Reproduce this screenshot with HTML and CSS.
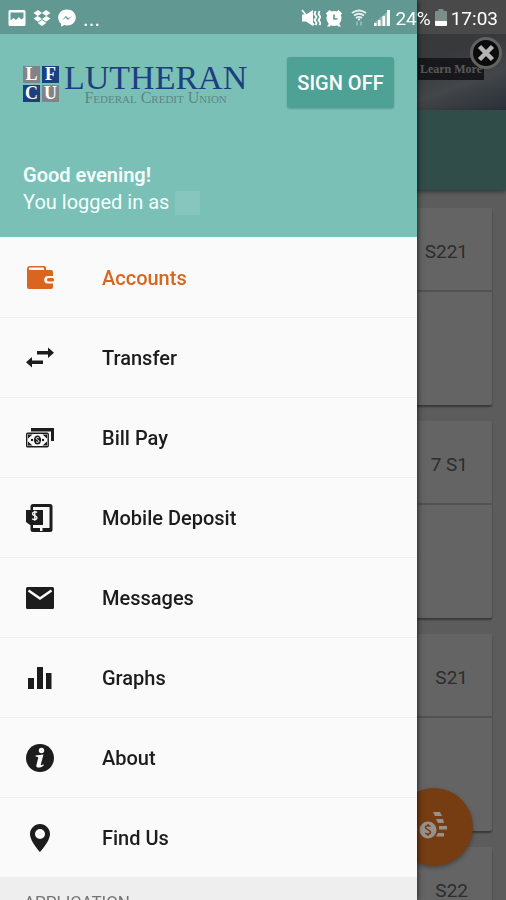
FILE: index.html
```
<!DOCTYPE html>
<html lang="en">
  <head>
    <meta charset="UTF-8" />
    <meta name="viewport" content="width=device-width, initial-scale=1.0" />
    <title>Lutheran Federal Credit Union</title>
    <link rel="stylesheet" href="styles.css">
  </head>
  <body>
    <!-- Accounts page behind the drawer -->
    <main class="page">
      <div class="banner">
        <a class="banner-link" href="#">Learn More</a>
      </div>
      <div class="toolbar"></div>
      <div class="cards">
        <section class="card"><h2 class="card-title">S221</h2></section>
        <section class="card"><h2 class="card-title">7 S1</h2></section>
        <section class="card"><h2 class="card-title">S21</h2></section>
        <section class="card"><h2 class="card-title">S22</h2></section>
      </div>
    </main>
    <div class="scrim"></div>

    <button class="close" type="button" aria-label="Close banner">
      <svg viewBox="0 0 32 32" width="32" height="32">
        <circle cx="16" cy="16" r="14.500" fill="#0b0b0b" stroke="#626262" stroke-width="3" />
        <path d="M9.500 9.500l13 13M22.500 9.500l-13 13" stroke="#b4b4b4" stroke-width="4.500" />
      </svg>
    </button>

    <button class="fab" type="button" aria-label="Payments">
      <svg viewBox="0 0 32 32" width="32" height="32">
        <g fill="#96928e">
          <path d="M15 1h7l2 4h-7zM18 8h7l1 4h-6zM21 15h8v3.500h-8zM20 22h6v3.500h-8z" />
          <circle cx="10" cy="19" r="8.500" />
        </g>
        <path d="M12.500 15.500c-1-1.200-5-1.200-5 1s5 2.500 5 4.700-4 2.300-5.200.8M10 13v2M10 23v2" fill="none" stroke="#763c12" stroke-width="1.600" />
      </svg>
    </button>

    <!-- Drawer -->
    <aside class="drawer">
      <header class="drawer-header">
        <div class="brand-row">
          <div class="brand">
            <div class="brand-mark">
              <span>L</span><span class="navy">F</span><span class="navy">C</span><span>U</span>
            </div>
            <div class="brand-text">
              <span class="brand-name">LUTHERAN</span>
              <span class="brand-sub">Federal Credit Union</span>
            </div>
          </div>
          <button class="sign-off" type="button">SIGN OFF</button>
        </div>
        <div class="greeting">
          <strong>Good evening!</strong>
          <p>You logged in as <span class="user"></span></p>
        </div>
      </header>

      <nav class="menu">
        <a class="menu-item active" href="#">
          <svg viewBox="0 0 32 32" width="32" height="32">
            <path d="M6 4h14a2 2 0 0 1 2 2v2h5a2 2 0 0 1 2 2v15a2 2 0 0 1-2 2H5a2 2 0 0 1-2-2V7a3 3 0 0 1 3-3zM6 5.500a1.200 1.200 0 0 0 0 2.500h14V6.500a1 1 0 0 0-1-1z" fill="currentColor" fill-rule="evenodd" />
            <path d="M30 14h-6a3.800 3.800 0 0 0 0 7.600h6z" fill="#fafafa" />
            <rect x="23" y="16" width="7" height="3.600" rx="1.500" fill="currentColor" />
          </svg>
          Accounts
        </a>
        <a class="menu-item" href="#">
          <svg viewBox="0 0 32 32" width="32" height="32" fill="currentColor">
            <path d="M13 9h11V5.500l6 5.200-6 5.200v-3.500H13zM19 18.500H8V15l-6 5.200 6 5.300V22h11z" />
          </svg>
          Transfer
        </a>
        <a class="menu-item" href="#">
          <svg viewBox="0 0 32 32" width="32" height="32">
            <path d="M7 6h23v13h-3V9.500H7z" fill="currentColor" />
            <rect x="2.700" y="11.200" width="21.500" height="13.600" rx="1" fill="#fafafa" stroke="currentColor" stroke-width="1.400" />
            <path d="M4 12.500h4.500L4 16.500zM23 12.500v4l-4.500-4zM4 19.500l4.500 4H4zM23 19.500v4h-4.500z" fill="currentColor" />
            <circle cx="8" cy="18" r="1.200" fill="currentColor" />
            <circle cx="19" cy="18" r="1.200" fill="currentColor" />
            <ellipse cx="13.500" cy="18" rx="3.600" ry="4.600" fill="currentColor" />
            <path d="M15 16c-1-1-2.800-.6-2.800.6s2.800 1.200 2.800 2.600-2 1.400-3 .5" fill="none" stroke="#fafafa" stroke-width="1" />
          </svg>
          Bill Pay
        </a>
        <a class="menu-item" href="#">
          <svg viewBox="0 0 32 32" width="32" height="32">
            <path d="M9 2h17a2.500 2.500 0 0 1 2.500 2.500v23a2.500 2.500 0 0 1-2.500 2.500H9a2.500 2.500 0 0 1-2.500-2.500v-23A2.500 2.500 0 0 1 9 2zm0 3v21h16.500V5z" fill="currentColor" fill-rule="evenodd" />
            <path d="M2 8h17v15H6l-4-3z" fill="currentColor" />
            <path d="M13 10.500c-1.200-1.300-4.500-.9-4.500 1.200s4.500 1.700 4.500 4-3.600 2.300-4.800.9M10.800 8.800v10" fill="none" stroke="#fafafa" stroke-width="1.400" />
            <path d="M16 25h2.500v4H16z" fill="#fafafa" />
          </svg>
          Mobile Deposit
        </a>
        <a class="menu-item" href="#">
          <svg viewBox="0 0 32 32" width="32" height="32">
            <rect x="2" y="5" width="28" height="22" rx="1.500" fill="currentColor" />
            <path d="M4.500 8.500L16 16.500l11.500-8" fill="none" stroke="#fafafa" stroke-width="2.600" />
          </svg>
          Messages
        </a>
        <a class="menu-item" href="#">
          <svg viewBox="0 0 32 32" width="32" height="32" fill="currentColor">
            <path d="M4 16h6v11H4zM13 5h6v22h-6zM22 11h5.500v16H22z" />
          </svg>
          Graphs
        </a>
        <a class="menu-item" href="#">
          <svg viewBox="0 0 32 32" width="32" height="32">
            <circle cx="16" cy="16" r="14" fill="currentColor" />
            <circle cx="17.500" cy="8.500" r="2.700" fill="#fafafa" />
            <path d="M11.500 13.500l8-1-2.700 10c-.3 1.200 1 1 2.500-.3l.5 1c-2 2.500-8 3.500-7.500.3l1.900-7.500c.2-1-.7-1.200-2.400-1.200z" fill="#fafafa" />
          </svg>
          About
        </a>
        <a class="menu-item" href="#">
          <svg viewBox="0 0 32 32" width="32" height="32" fill="currentColor">
            <path d="M16 2C10.500 2 6 6.500 6 12c0 7.300 10 18 10 18s10-10.700 10-18c0-5.500-4.500-10-10-10zm0 5a5 5 0 1 1 0 10 5 5 0 0 1 0-10z" fill-rule="evenodd" />
          </svg>
          Find Us
        </a>
      </nav>
      <h2 class="menu-heading">APPLICATION</h2>
    </aside>

    <!-- Android status bar -->
    <div class="status-bar">
      <svg viewBox="0 0 18 18" width="18" height="18">
        <path d="M2 1h14a1.500 1.500 0 0 1 1.500 1.500v13A1.500 1.500 0 0 1 16 17H2A1.500 1.500 0 0 1 .5 15.500v-13A1.500 1.500 0 0 1 2 1zm.5 2.500v8l3-2.500 2.500 2 3-3 2 2.500 2.500-1.500v-5.500z" fill-rule="evenodd" />
      </svg>
      <svg viewBox="0 0 18 18" width="18" height="18">
        <path d="M5 1l4 3-4.300 3L.5 4zM13 1l4.500 3-4.200 3L9 4zM.5 9.500l4.200-2.500L9 10l-4 2.800zM17.500 9.500L13.300 7 9 10l4 2.800zM9 11l4.300 3L9 17l-4.300-3z" />
      </svg>
      <svg viewBox="0 0 18 18" width="18" height="18">
        <path d="M9 .5c5 0 8.800 3.500 8.800 8S14 16.500 9 16.500c-1 0-2-.1-2.800-.4L3 17.800v-3.200C1.200 13.200.2 11 .2 8.500.2 4 4 .5 9 .5z" />
        <path d="M4 11l4-4 2.300 2.200L14 7l-4 4-2.300-2.200z" fill="#639a92" />
      </svg>
      <span class="more">...</span>
      <div class="status-right">
        <svg viewBox="0 0 20 18" width="20" height="18">
          <path d="M1 5.500h4l7-4.500v16l-7-4.500H1z" />
          <path d="M1 1l12 15" fill="none" stroke="#fff" stroke-width="1.600" />
          <path d="M14.500 2l-1 3 2 3-2 3 2 3-1 2M18.500 2l-1 3 2 3-2 3 2 3-1 2" fill="none" stroke="#fff" stroke-width="1.800" />
        </svg>
        <svg viewBox="0 0 18 18" width="18" height="18">
          <circle cx="9" cy="9.500" r="7.500" />
          <path d="M.8 4.500L4.500 1l2 1.500-4 4zM17.200 4.500L13.500 1l-2 1.500 4 4zM2 17.500l2-3 2 1.500-1 1.500zM16 17.500l-2-3-2 1.500 1 1.500z" />
          <path d="M9 5.500v4.500h3.500" fill="none" stroke="#639a92" stroke-width="1.600" />
        </svg>
        <svg class="wifi" viewBox="0 0 16 18" width="16" height="18">
          <path d="M1 4q7-5 14 0M3 6.500q5-3.500 10 0M5 9q3-2.200 6 0" fill="none" stroke="#e4eeec" stroke-width="1.900" />
          <path d="M6.500 9.500h3L8 12z" />
          <path d="M6 12.500v4M10 12.500v4" stroke="#9fc0bb" stroke-width="1.600" />
        </svg>
        <svg viewBox="0 0 18 18" width="18" height="18">
          <path d="M1 14h2.500v3H1zM5 11h2.500v6H5zM9.500 7H12v10H9.500zM14 1h3v16h-3z" />
          <path d="M1 14L14 3v14H1z" opacity=".3" />
        </svg>
        <span>24%</span>
        <svg class="battery" viewBox="0 0 12 18" width="12" height="18">
          <path d="M3.500 0h5v2H11a1 1 0 0 1 1 1v9H0V3a1 1 0 0 1 1-1h2.500z" fill="#7c8d8a" />
          <path d="M0 12h12v4a1 1 0 0 1-1 1H1a1 1 0 0 1-1-1z" />
        </svg>
        <span>17:03</span>
      </div>
    </div>
  </body>
</html>
```
FILE: styles.css
```
* {
  box-sizing: border-box;
}

body {
  margin: 0;
  height: 100vh;
  overflow: hidden;
  font-family: Roboto, "Noto Sans", sans-serif;
  font-size: 20px;
  color: #1c1c1c;
}

h2,
p {
  margin: 0;
}

button {
  border: 0;
  padding: 0;
  font: inherit;
  cursor: pointer;
}

svg {
  display: block;
  flex: none;
}

/* Page behind the drawer */
.page {
  height: 100vh;
  padding-top: 34px;
  overflow: hidden;
  background: #e6e6e6;
}

.banner {
  display: flex;
  justify-content: flex-end;
  align-items: flex-start;
  height: 76px;
  padding: 24px 22px;
  background: linear-gradient(160deg, #8a8f94 70%, #a8b0b8 84%, #66778a);
}

.banner-link {
  padding: 0 2px;
  background: #3c3e48;
  color: #dcdcdc;
  font: bold 12px/22px "Liberation Serif", serif;
  text-decoration: none;
}

.toolbar {
  height: 80px;
  background: #7ac0b7;
  box-shadow: 0 2px 4px rgba(0, 0, 0, 0.4);
}

.cards {
  display: flex;
  flex-direction: column;
  gap: 16px;
  padding: 18px 14px;
}

.card {
  height: 197px;
  flex: none;
  background: #fafafa;
  border-radius: 2px;
  box-shadow: 0 2px 2px rgba(0, 0, 0, 0.4);
}

.card-title {
  padding: 6px 24px 0;
  border-bottom: 2px solid #cccccc;
  color: #707070;
  font-size: 19px;
  font-weight: 400;
  line-height: 76px;
  text-align: right;
}

.scrim {
  position: fixed;
  inset: 0;
  background: rgba(0, 0, 0, 0.6);
}

.close {
  position: fixed;
  top: 37px;
  right: 4px;
  border-radius: 50%;
  background: none;
}

.fab {
  position: fixed;
  right: 33px;
  bottom: 34px;
  display: flex;
  justify-content: center;
  align-items: center;
  width: 78px;
  height: 78px;
  border-radius: 50%;
  background: #763c12;
  box-shadow: 0 2px 4px rgba(0, 0, 0, 0.3);
}

/* Drawer */
.drawer {
  position: fixed;
  top: 0;
  bottom: 0;
  left: 0;
  width: calc(100% - 89px);
  overflow: hidden;
  background: #fafafa;
  box-shadow: 0 0 6px rgba(0, 0, 0, 0.8);
}

.drawer-header {
  padding: 57px 23px 21px;
  background: #7ac0b7;
  color: #f4fffd;
}

.brand-row {
  display: flex;
  justify-content: space-between;
  align-items: center;
  height: 51px;
}

.brand {
  display: flex;
  align-items: center;
  gap: 5px;
  padding-top: 2px;
  font-family: "Liberation Serif", serif;
}

.brand-mark {
  display: grid;
  grid-template-columns: 17px 17px;
  gap: 2px;
  color: #ffffff;
  font-size: 18px;
  font-weight: bold;
  line-height: 17px;
  text-align: center;
}

.brand-mark span {
  background: #808487;
}

.brand-mark .navy {
  background: #1c3f80;
}

.brand-text {
  display: flex;
  flex-direction: column;
  align-items: center;
}

.brand-name {
  color: #1c3f80;
  font-size: 34px;
  line-height: 28px;
}

.brand-sub {
  color: #5f8583;
  font-size: 16px;
  font-variant: small-caps;
  line-height: 12px;
}

.sign-off {
  width: 107px;
  height: 51px;
  border-radius: 3px;
  background: #4da195;
  box-shadow: 0 1px 2px rgba(0, 0, 0, 0.2);
  color: #ffffff;
  font-weight: 500;
}

.greeting {
  padding-top: 54px;
  line-height: 27px;
}

.greeting strong {
  font-weight: 600;
}

.greeting p {
  display: flex;
  align-items: center;
  gap: 6px;
}

.user {
  width: 25px;
  height: 24px;
  background: #86c6be;
}

.menu {
  padding-top: 1px;
}

.menu-item {
  display: flex;
  align-items: center;
  gap: 46px;
  height: 80px;
  padding: 0 24px;
  border-bottom: 1px solid #eeeeee;
  color: #1c1c1c;
  font-weight: 500;
  text-decoration: none;
}

.menu-item.active {
  color: #d9651e;
}

.menu-heading {
  padding: 12px 24px;
  background: #eeeeee;
  color: #757575;
  font-size: 17px;
  font-weight: 400;
  line-height: 24px;
}

/* Status bar */
.status-bar {
  position: fixed;
  top: 0;
  left: 0;
  right: 0;
  display: flex;
  align-items: center;
  gap: 7px;
  height: 34px;
  padding: 2px 8px 0;
  background: rgba(0, 0, 0, 0.2);
  color: #ffffff;
  fill: #ffffff;
  font-size: 19px;
}

.more {
  font-size: 22px;
}

.status-right {
  display: flex;
  align-items: center;
  gap: 4px;
  margin-left: auto;
}

.status-right .wifi {
  margin: 0 2px 0 4px;
}
```
